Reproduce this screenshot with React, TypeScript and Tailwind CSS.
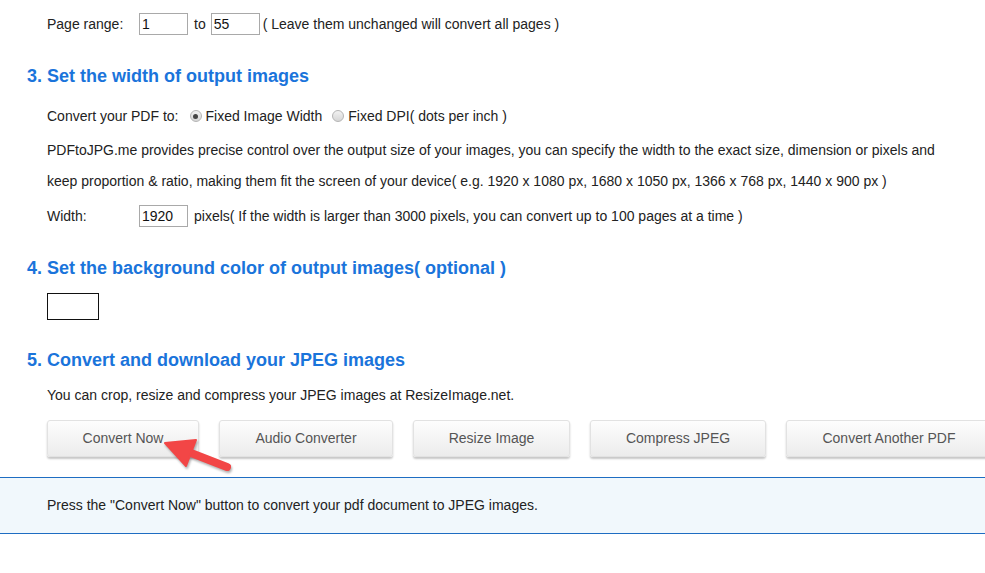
import React from 'react';

const buttons = [
  { label: 'Convert Now', w: 'w-[152px]' },
  { label: 'Audio Converter', w: 'w-[174px]' },
  { label: 'Resize Image', w: 'w-[157px]' },
  { label: 'Compress JPEG', w: 'w-[176px]' },
  { label: 'Convert Another PDF', w: 'w-[206px]' },
];

const TextBox = ({ value }: { value: string }) => (
  <div className="flex h-[22px] w-[49px] shrink-0 items-center border border-[#a9a9a9] bg-white pl-[2px] text-[14px] text-[#111]">
    {value}
  </div>
);

const Radio = ({ checked }: { checked?: boolean }) => (
  <span className="flex h-[12px] w-[12px] shrink-0 items-center justify-center rounded-full border border-[#b5b5b5] bg-gradient-to-b from-[#f2f2f2] to-[#d6d6d6]">
    {checked && <span className="h-[5px] w-[5px] rounded-full bg-[#444]" />}
  </span>
);

const Heading = ({ children }: { children: React.ReactNode }) => (
  <h2 className="flex h-[24px] items-center pl-[27px] text-[18px] font-bold text-[#1a74db]">{children}</h2>
);

const App = () => {
  return (
    <div className="relative h-[573px] w-[985px] overflow-hidden bg-white font-['Liberation_Sans',Arial,sans-serif] text-[14px] text-[#222]">
      {/* page range */}
      <div className="mt-[13px] flex h-[22px] items-center pl-[47px]">
        <span className="w-[92px]">Page range:</span>
        <TextBox value="1" />
        <span className="ml-[6px] mr-[5px]">to</span>
        <TextBox value="55" />
        <span className="ml-[3px]">( Leave them unchanged will convert all pages )</span>
      </div>

      <div className="mt-[29px]">
        <Heading>3. Set the width of output images</Heading>
      </div>

      <div className="mt-[17px] flex h-[22px] items-center pl-[47px]">
        <span className="mr-[11px]">Convert your PDF to:</span>
        <Radio checked />
        <span className="ml-[4px] mr-[10px]">Fixed Image Width</span>
        <Radio />
        <span className="ml-[4px]">Fixed DPI( dots per inch )</span>
      </div>

      <p className="mt-[8px] pl-[47px] pr-[40px] leading-[31px]">
        PDFtoJPG.me provides precise control over the output size of your images, you can specify the width to the exact size, dimension or pixels and
        keep proportion &amp; ratio, making them fit the screen of your device( e.g. 1920 x 1080 px, 1680 x 1050 px, 1366 x 768 px, 1440 x 900 px )
      </p>

      <div className="mt-[8px] flex h-[22px] items-center pl-[47px]">
        <span className="w-[92px]">Width:</span>
        <TextBox value="1920" />
        <span className="ml-[6px]">pixels( If the width is larger than 3000 pixels, you can convert up to 100 pages at a time )</span>
      </div>

      <div className="mt-[29px]">
        <Heading>4. Set the background color of output images( optional )</Heading>
      </div>

      <div className="mt-[13px] pl-[47px]">
        <div className="h-[27px] w-[52px] border border-[#111] bg-white" />
      </div>

      <div className="mt-[28px]">
        <Heading>5. Convert and download your JPEG images</Heading>
      </div>

      <div className="mt-[12px] flex h-[22px] items-center pl-[47px]">
        You can crop, resize and compress your JPEG images at ResizeImage.net.
      </div>

      <div className="mt-[14px] flex gap-[20px] pl-[47px]">
        {buttons.map((b) => (
          <button
            key={b.label}
            className={`${b.w} flex h-[37px] shrink-0 items-center justify-center rounded-[3px] border border-[#e2e2e2] bg-gradient-to-b from-[#fdfdfd] to-[#ececec] text-[14px] text-[#555] shadow-[0_2px_2px_rgba(0,0,0,0.22)]`}
          >
            {b.label}
          </button>
        ))}
      </div>

      <div className="mt-[20px] flex h-[57px] items-center border-y border-[#1e6dc2] bg-[#f1f8fc] pl-[47px]">
        Press the "Convert Now" button to convert your pdf document to JPEG images.
      </div>

      {/* red pointer arrow */}
      <svg
        className="absolute left-[155px] top-[432px] drop-shadow-[1px_2px_1px_rgba(0,0,0,0.3)]"
        width="85"
        height="45"
        viewBox="0 0 85 45"
      >
        <line x1="36" y1="21" x2="72" y2="35" stroke="#f24646" strokeWidth="8" strokeLinecap="round" />
        <polygon points="10,11 41,8 31,34" fill="#f24646" stroke="#f24646" strokeWidth="2" strokeLinejoin="round" />
      </svg>
    </div>
  );
};

export default App;
